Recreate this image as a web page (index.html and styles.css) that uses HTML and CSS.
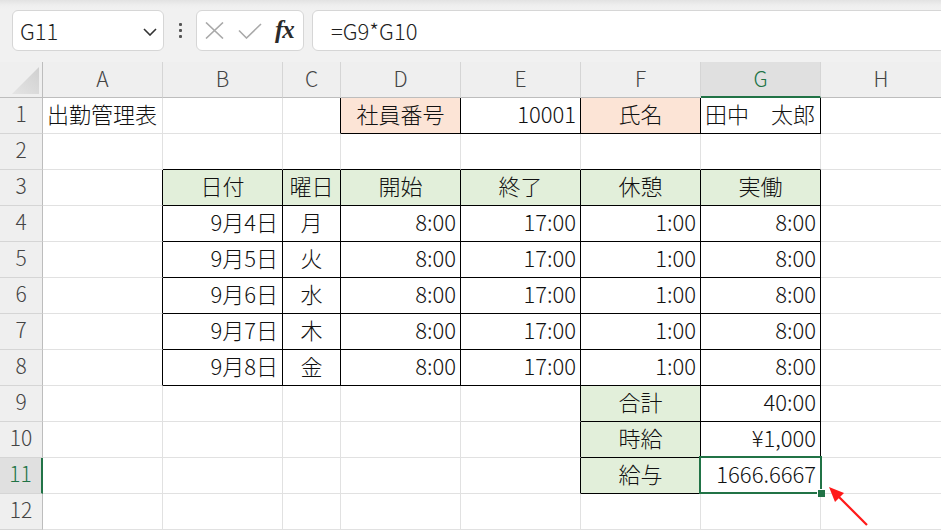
FILE: index.html
```html
<!DOCTYPE html>
<html lang="ja">
<head>
<meta charset="utf-8">
<title>出勤管理表</title>
<link rel="stylesheet" href="styles.css">
</head>
<body>
<div class="app">
  <div class="toolbar">
    <div class="namebox">
      <span class="nb-text">G11</span>
      <svg class="chev" width="14" height="8" viewBox="0 0 14 8"><path d="M1 1 L7 7 L13 1" fill="none" stroke="#333" stroke-width="1.6"/></svg>
    </div>
    <div class="dots"><i></i><i></i><i></i></div>
    <div class="fxbox">
      <svg class="ic-x" width="19" height="17" viewBox="0 0 19 17"><path d="M1 0.5 L18 16.5 M18 0.5 L1 16.5" stroke="#a9a9a9" stroke-width="1.6" fill="none"/></svg>
      <svg class="ic-ok" width="24" height="16" viewBox="0 0 24 16"><path d="M1 7.5 L8.5 15 L23 1" stroke="#a9a9a9" stroke-width="1.6" fill="none"/></svg>
      <span class="fx">fx</span>
    </div>
    <div class="formula">=G9*G10</div>
  </div>

  <div class="sheet">
    <div class="corner"><svg width="43" height="36" viewBox="0 0 43 36"><defs><linearGradient id="tg" x1="0" y1="1" x2="1" y2="0"><stop offset="0" stop-color="#e4e4e4"/><stop offset="1" stop-color="#d0d0d0"/></linearGradient></defs><path d="M12 32 L39 5 L39 32 Z" fill="url(#tg)"/></svg></div>
    <div class="ch">A</div><div class="ch">B</div><div class="ch">C</div><div class="ch">D</div><div class="ch">E</div><div class="ch">F</div><div class="ch ch-sel">G</div><div class="ch">H</div>

    <div class="rh">1</div>
    <div class="c">出勤管理表</div><div class="c"></div><div class="c tr"></div>
    <div class="c t pe m">社員番号</div><div class="c t r">10001</div><div class="c t pe m">氏名</div><div class="c t">田中　太郎</div><div class="c"></div>

    <div class="rh">2</div>
    <div class="c"></div><div class="c tb"></div><div class="c tb"></div><div class="c tb"></div><div class="c tb"></div><div class="c tb"></div><div class="c tb"></div><div class="c"></div>

    <div class="rh">3</div>
    <div class="c tr"></div><div class="c t gr m">日付</div><div class="c t gr m">曜日</div><div class="c t gr m">開始</div><div class="c t gr m">終了</div><div class="c t gr m">休憩</div><div class="c t gr m">実働</div><div class="c"></div>

    <div class="rh">4</div>
    <div class="c tr"></div><div class="c t r">9月4日</div><div class="c t m">月</div><div class="c t r">8:00</div><div class="c t r">17:00</div><div class="c t r">1:00</div><div class="c t r">8:00</div><div class="c"></div>

    <div class="rh">5</div>
    <div class="c tr"></div><div class="c t r">9月5日</div><div class="c t m">火</div><div class="c t r">8:00</div><div class="c t r">17:00</div><div class="c t r">1:00</div><div class="c t r">8:00</div><div class="c"></div>

    <div class="rh">6</div>
    <div class="c tr"></div><div class="c t r">9月6日</div><div class="c t m">水</div><div class="c t r">8:00</div><div class="c t r">17:00</div><div class="c t r">1:00</div><div class="c t r">8:00</div><div class="c"></div>

    <div class="rh">7</div>
    <div class="c tr"></div><div class="c t r">9月7日</div><div class="c t m">木</div><div class="c t r">8:00</div><div class="c t r">17:00</div><div class="c t r">1:00</div><div class="c t r">8:00</div><div class="c"></div>

    <div class="rh">8</div>
    <div class="c tr"></div><div class="c t r">9月8日</div><div class="c t m">金</div><div class="c t r">8:00</div><div class="c t r">17:00</div><div class="c t r">1:00</div><div class="c t r">8:00</div><div class="c"></div>

    <div class="rh">9</div>
    <div class="c"></div><div class="c"></div><div class="c"></div><div class="c"></div><div class="c tr"></div><div class="c t gr m">合計</div><div class="c t r">40:00</div><div class="c"></div>

    <div class="rh">10</div>
    <div class="c"></div><div class="c"></div><div class="c"></div><div class="c"></div><div class="c tr"></div><div class="c t gr m">時給</div><div class="c t r">¥1,000</div><div class="c"></div>

    <div class="rh rh-sel">11</div>
    <div class="c"></div><div class="c"></div><div class="c"></div><div class="c"></div><div class="c tr"></div><div class="c t gr m">給与</div><div class="c t r sel">1666.6667</div><div class="c"></div>

    <div class="rh">12</div>
    <div class="c"></div><div class="c"></div><div class="c"></div><div class="c"></div><div class="c"></div><div class="c"></div><div class="c"></div><div class="c"></div>
  </div>

  <svg class="arrow" width="941" height="530" viewBox="0 0 941 530">
    <line x1="867" y1="525" x2="836" y2="494" stroke="#ff1a1a" stroke-width="2.2"/>
    <path d="M829 487 L844 493 L835 502 Z" fill="#ff1a1a"/>
  </svg>
</div>
</body>
</html>
```

FILE: styles.css
```css
* { box-sizing: border-box; }

html, body {
  margin: 0;
  padding: 0;
  width: 941px;
  height: 530px;
  overflow: hidden;
  background: #ffffff;
  font-family: "Noto Sans CJK JP", "Noto Sans", sans-serif;
}

.app {
  position: relative;
  width: 941px;
  height: 530px;
  overflow: hidden;
}

/* ---------- toolbar ---------- */
.toolbar {
  height: 62px;
  display: flex;
  align-items: flex-start;
  padding-top: 10px;
  background: linear-gradient(to bottom, #e2e2e2 0px, #eeeeee 5px, #f1f1f1 9px, #f1f1f1 100%);
}

.namebox {
  margin-left: 12px;
  width: 152px;
  height: 41px;
  background: #ffffff;
  border: 1px solid #d6d6d6;
  border-radius: 6px;
  display: flex;
  align-items: center;
  justify-content: space-between;
  padding: 0 6px 0 7px;
}

.nb-text {
  font-size: 22px;
  font-weight: 300;
  color: #1e1e1e;
  line-height: 1;
  margin-top: -1px;
}

.chev { display: block; margin-top: 2px; }

.dots {
  width: 32px;
  height: 41px;
  display: flex;
  flex-direction: column;
  align-items: center;
  justify-content: center;
  gap: 3px;
}
.dots i {
  display: block;
  width: 3px;
  height: 3px;
  background: #555555;
  border-radius: 1px;
}

.fxbox {
  width: 108px;
  height: 41px;
  background: #ffffff;
  border: 1px solid #d6d6d6;
  border-radius: 6px;
  display: flex;
  align-items: center;
  padding-left: 8px;
}
.ic-x { display: block; margin-right: 14px; }
.ic-ok { display: block; margin-right: 13px; }
.fx {
  font-family: "Liberation Serif", "DejaVu Serif", serif;
  font-style: italic;
  font-weight: bold;
  font-size: 25px;
  color: #2a2a2a;
  line-height: 1;
  letter-spacing: -1px;
  margin-top: -3px;
}

.formula {
  flex: 1;
  margin-left: 8px;
  margin-right: -12px;
  height: 41px;
  background: #ffffff;
  border: 1px solid #d6d6d6;
  border-radius: 6px;
  display: flex;
  align-items: center;
  padding-left: 18px;
  padding-bottom: 2px;
  font-size: 22px;
  font-weight: 300;
  color: #1e1e1e;
  line-height: 1;
}

/* ---------- sheet ---------- */
.sheet {
  display: grid;
  grid-template-columns: 43px 120px 120px 58px 120px 120px 120px 120px 121px;
  grid-template-rows: repeat(13, 36px);
  width: 942px;
}

.corner {
  background: #efefef;
  border-right: 1px solid #bdbdbd;
  border-bottom: 1px solid #bdbdbd;
}
.corner svg { display: block; }

.ch {
  background: #efefef;
  border-right: 1px solid #d5d5d5;
  border-bottom: 1px solid #bdbdbd;
  display: flex;
  align-items: center;
  justify-content: center;
  padding-bottom: 3px;
  font-size: 21px;
  font-weight: 300;
  color: #444444;
  line-height: 1;
}
.ch-sel {
  background: #e0e0e0;
  color: #217346;
  border-bottom: 2px solid #217346;
  padding-bottom: 2px;
}

.rh {
  background: #efefef;
  border-right: 1px solid #bdbdbd;
  border-bottom: 1px solid #d5d5d5;
  display: flex;
  align-items: center;
  justify-content: center;
  padding-bottom: 5px;
  font-size: 21px;
  font-weight: 300;
  color: #444444;
  line-height: 1;
}
.rh-sel {
  background: #e0e0e0;
  color: #217346;
  border-right: 2px solid #217346;
}

.c {
  border-right: 1px solid #e1e1e1;
  border-bottom: 1px solid #e1e1e1;
  display: flex;
  align-items: center;
  padding: 0 4px 5px 4px;
  font-size: 22px;
  font-weight: 300;
  color: #111111;
  line-height: 1;
  white-space: nowrap;
}
.r { justify-content: flex-end; }
.m { justify-content: center; }

.t { border-right-color: #000000; border-bottom-color: #000000; }
.tr { border-right-color: #000000; }
.tb { border-bottom-color: #000000; }

.pe { background: #fce4d6; }
.gr { background: #e2efda; }

.sel { position: relative; }
.sel::after {
  content: "";
  position: absolute;
  left: -2px;
  top: -2px;
  right: -2px;
  bottom: -1px;
  border: 2px solid #217346;
  pointer-events: none;
}
.sel::before {
  content: "";
  position: absolute;
  left: 116px;
  top: 31px;
  width: 7px;
  height: 7px;
  background: #217346;
  border-left: 1px solid #ffffff;
  border-top: 1px solid #ffffff;
  z-index: 2;
}

.arrow {
  position: absolute;
  left: 0;
  top: 0;
  pointer-events: none;
}
```
